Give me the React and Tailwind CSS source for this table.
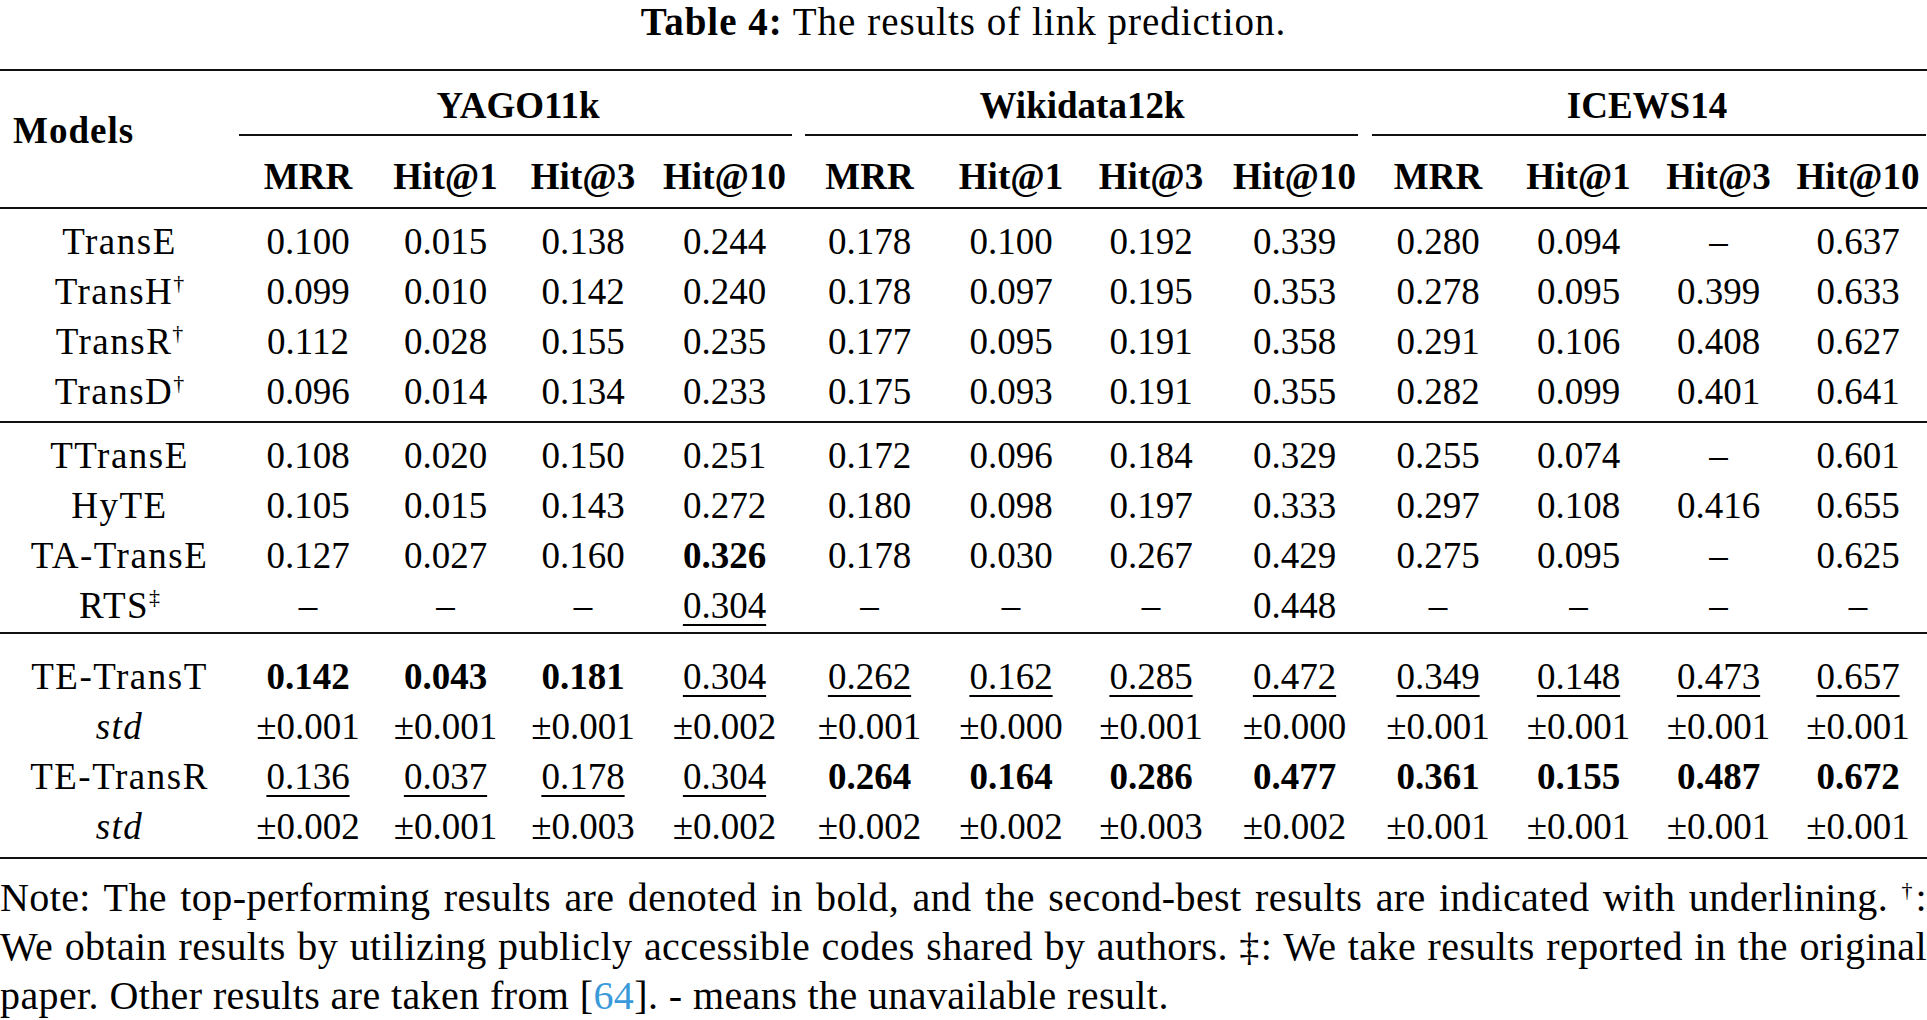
const cols =
  "grid grid-cols-[239px_138px_137px_138px_145px_145px_138px_142px_145px_142px_139px_141px_138px]";

const groupA = [
  ["TransE", "", ["0.100", "0.015", "0.138", "0.244", "0.178", "0.100", "0.192", "0.339", "0.280", "0.094", "–", "0.637"]],
  ["TransH", "†", ["0.099", "0.010", "0.142", "0.240", "0.178", "0.097", "0.195", "0.353", "0.278", "0.095", "0.399", "0.633"]],
  ["TransR", "†", ["0.112", "0.028", "0.155", "0.235", "0.177", "0.095", "0.191", "0.358", "0.291", "0.106", "0.408", "0.627"]],
  ["TransD", "†", ["0.096", "0.014", "0.134", "0.233", "0.175", "0.093", "0.191", "0.355", "0.282", "0.099", "0.401", "0.641"]],
];

const groupB = [
  ["TTransE", "", ["0.108", "0.020", "0.150", "0.251", "0.172", "0.096", "0.184", "0.329", "0.255", "0.074", "–", "0.601"]],
  ["HyTE", "", ["0.105", "0.015", "0.143", "0.272", "0.180", "0.098", "0.197", "0.333", "0.297", "0.108", "0.416", "0.655"]],
  ["TA-TransE", "", ["0.127", "0.027", "0.160", "b:0.326", "0.178", "0.030", "0.267", "0.429", "0.275", "0.095", "–", "0.625"]],
  ["RTS", "‡", ["–", "–", "–", "u:0.304", "–", "–", "–", "0.448", "–", "–", "–", "–"]],
];

const groupC = [
  ["TE-TransT", "", ["b:0.142", "b:0.043", "b:0.181", "u:0.304", "u:0.262", "u:0.162", "u:0.285", "u:0.472", "u:0.349", "u:0.148", "u:0.473", "u:0.657"]],
  ["std", "i", ["±0.001", "±0.001", "±0.001", "±0.002", "±0.001", "±0.000", "±0.001", "±0.000", "±0.001", "±0.001", "±0.001", "±0.001"]],
  ["TE-TransR", "", ["u:0.136", "u:0.037", "u:0.178", "u:0.304", "b:0.264", "b:0.164", "b:0.286", "b:0.477", "b:0.361", "b:0.155", "b:0.487", "b:0.672"]],
  ["std", "i", ["±0.002", "±0.001", "±0.003", "±0.002", "±0.002", "±0.002", "±0.003", "±0.002", "±0.001", "±0.001", "±0.001", "±0.001"]],
];

const metrics = ["MRR", "Hit@1", "Hit@3", "Hit@10"];

function Value({ v }) {
  if (v.startsWith("b:")) return <span className="font-bold">{v.slice(2)}</span>;
  if (v.startsWith("u:"))
    return (
      <span className="underline decoration-[2px] underline-offset-[6px]">
        {v.slice(2)}
      </span>
    );
  return <span>{v}</span>;
}

function Mark({ children }) {
  return <span className="text-[22px] leading-none align-[14px] tracking-normal">{children}</span>;
}

function Row({ row }) {
  const [name, mark, values] = row;
  return (
    <div className={`${cols} h-[50px] leading-[50px]`}>
      <div className="text-center tracking-[1.5px]">
        {mark === "i" ? (
          <span className="italic">{name}</span>
        ) : (
          <>
            {name}
            {mark && <Mark>{mark}</Mark>}
          </>
        )}
      </div>
      {values.map((v, i) => (
        <div key={i} className="text-center whitespace-nowrap">
          <Value v={v} />
        </div>
      ))}
    </div>
  );
}

function Rule({ className = "" }) {
  return <div className={`h-[2px] bg-[#111] ${className}`} />;
}

export default function App() {
  return (
    <div className="w-[1927px] h-[1020px] overflow-hidden bg-white text-black font-['Liberation_Serif','Times_New_Roman',serif] text-[37px]">
      {/* caption */}
      <div className="h-[44px] leading-[44px] text-center text-[39px] tracking-[1px]">
        <span className="font-bold">Table 4:</span> The results of link prediction.
      </div>

      <Rule className="mt-[25px]" />

      {/* header */}
      <div className={`${cols} grid-rows-[65px_71px]`}>
        <div className="row-span-2 pl-[13px] pt-[35px] leading-[50px] font-bold tracking-[1px]">Models</div>
        {[
          ["YAGO11k", "mr-[5px]"],
          ["Wikidata12k", "ml-[8px] mr-[9px]"],
          ["ICEWS14", "ml-[5px] mr-[1px]"],
        ].map(([label, trim]) => (
          <div key={label} className="col-span-4 flex flex-col">
            <div className="pt-[10px] leading-[50px] text-center font-bold">{label}</div>
            <div className={`mt-[3px] h-[2px] bg-[#111] ${trim}`} />
          </div>
        ))}
        {[0, 1, 2].flatMap((g) =>
          metrics.map((m) => (
            <div key={`${g}-${m}`} className="pt-[16px] leading-[50px] text-center font-bold whitespace-nowrap">
              {m}
            </div>
          ))
        )}
      </div>

      <Rule />
      <div className="pt-[8px] pb-[4px]">
        {groupA.map((r, i) => (
          <Row key={i} row={r} />
        ))}
      </div>

      <Rule />
      <div className="pt-[8px] pb-[1px]">
        {groupB.map((r, i) => (
          <Row key={i} row={r} />
        ))}
      </div>

      <Rule />
      <div className="pt-[18px] pb-[5px]">
        {groupC.map((r, i) => (
          <Row key={i} row={r} />
        ))}
      </div>

      <Rule />

      {/* note */}
      <div className="mt-[14px] leading-[49px] text-[40px] tracking-[0.4px]">
        <div className="text-justify [text-align-last:justify] whitespace-nowrap">
          Note: The top-performing results are denoted in bold, and the second-best results are indicated with underlining.{" "}
          <Mark>†</Mark>:
        </div>
        <div className="text-justify [text-align-last:justify] whitespace-nowrap">
          We obtain results by utilizing publicly accessible codes shared by authors. ‡: We take results reported in the original
        </div>
        <div className="whitespace-nowrap">
          paper. Other results are taken from [<span className="text-[#3a9ad9]">64</span>]. - means the unavailable result.
        </div>
      </div>
    </div>
  );
}
